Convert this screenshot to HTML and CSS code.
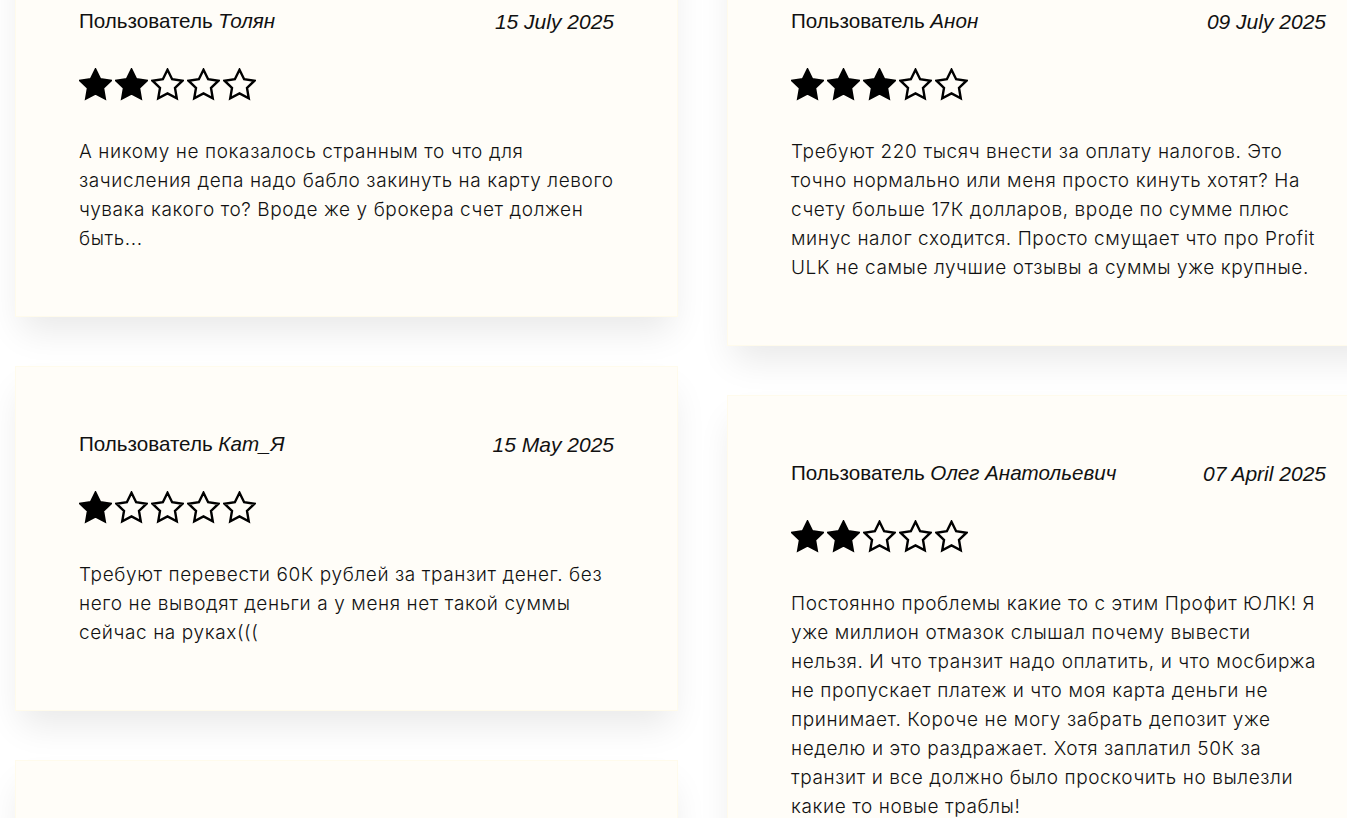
FILE: index.html
```html
<!DOCTYPE html>
<html lang="ru">
<head>
<meta charset="utf-8">
<title>Отзывы</title>
<link rel="stylesheet" href="styles.css">
</head>
<body>
<svg width="0" height="0" class="defs" aria-hidden="true">
  <defs>
    <polygon id="star" points="12,2.2 15.09,8.46 22,9.47 17,14.34 18.18,21.22 12,17.97 5.82,21.22 7,14.34 2,9.47 8.91,8.46"/>
  </defs>
</svg>
<main class="reviews">
  <div class="col">
    <article class="card">
      <header class="card-head">
        <span class="author">Пользователь <em>Толян</em></span>
        <span class="date">15 July 2025</span>
      </header>
      <div class="stars">
        <svg class="star full" viewBox="1 1 22 22"><use href="#star"/></svg>
        <svg class="star full" viewBox="1 1 22 22"><use href="#star"/></svg>
        <svg class="star" viewBox="1 1 22 22"><use href="#star"/></svg>
        <svg class="star" viewBox="1 1 22 22"><use href="#star"/></svg>
        <svg class="star" viewBox="1 1 22 22"><use href="#star"/></svg>
      </div>
      <p class="text">А никому не показалось странным то что для зачисления депа надо бабло закинуть на карту левого чувака какого то? Вроде же у брокера счет должен быть...</p>
    </article>
    <article class="card">
      <header class="card-head">
        <span class="author">Пользователь <em>Кат_Я</em></span>
        <span class="date">15 May 2025</span>
      </header>
      <div class="stars">
        <svg class="star full" viewBox="1 1 22 22"><use href="#star"/></svg>
        <svg class="star" viewBox="1 1 22 22"><use href="#star"/></svg>
        <svg class="star" viewBox="1 1 22 22"><use href="#star"/></svg>
        <svg class="star" viewBox="1 1 22 22"><use href="#star"/></svg>
        <svg class="star" viewBox="1 1 22 22"><use href="#star"/></svg>
      </div>
      <p class="text">Требуют перевести 60К рублей за транзит денег. без него не выводят деньги а у меня нет такой суммы сейчас на руках(((</p>
    </article>
    <article class="card">
      <header class="card-head">
        <span class="author">Пользователь <em>Марина</em></span>
        <span class="date">02 April 2025</span>
      </header>
      <div class="stars">
        <svg class="star full" viewBox="1 1 22 22"><use href="#star"/></svg>
        <svg class="star" viewBox="1 1 22 22"><use href="#star"/></svg>
        <svg class="star" viewBox="1 1 22 22"><use href="#star"/></svg>
        <svg class="star" viewBox="1 1 22 22"><use href="#star"/></svg>
        <svg class="star" viewBox="1 1 22 22"><use href="#star"/></svg>
      </div>
      <p class="text">Вывод не работает уже месяц.</p>
    </article>
  </div>
  <div class="col">
    <article class="card">
      <header class="card-head">
        <span class="author">Пользователь <em>Анон</em></span>
        <span class="date">09 July 2025</span>
      </header>
      <div class="stars">
        <svg class="star full" viewBox="1 1 22 22"><use href="#star"/></svg>
        <svg class="star full" viewBox="1 1 22 22"><use href="#star"/></svg>
        <svg class="star full" viewBox="1 1 22 22"><use href="#star"/></svg>
        <svg class="star" viewBox="1 1 22 22"><use href="#star"/></svg>
        <svg class="star" viewBox="1 1 22 22"><use href="#star"/></svg>
      </div>
      <p class="text">Требуют 220 тысяч внести за оплату налогов. Это точно нормально или меня просто кинуть хотят? На счету больше 17К долларов, вроде по сумме плюс минус налог сходится. Просто смущает что про Profit ULK не самые лучшие отзывы а суммы уже крупные.</p>
    </article>
    <article class="card">
      <header class="card-head">
        <span class="author">Пользователь <em>Олег Анатольевич</em></span>
        <span class="date">07 April 2025</span>
      </header>
      <div class="stars">
        <svg class="star full" viewBox="1 1 22 22"><use href="#star"/></svg>
        <svg class="star full" viewBox="1 1 22 22"><use href="#star"/></svg>
        <svg class="star" viewBox="1 1 22 22"><use href="#star"/></svg>
        <svg class="star" viewBox="1 1 22 22"><use href="#star"/></svg>
        <svg class="star" viewBox="1 1 22 22"><use href="#star"/></svg>
      </div>
      <p class="text">Постоянно проблемы какие то с этим Профит ЮЛК! Я уже миллион отмазок слышал почему вывести нельзя. И что транзит надо оплатить, и что мосбиржа не пропускает платеж и что моя карта деньги не принимает. Короче не могу забрать депозит уже неделю и это раздражает. Хотя заплатил 50К за транзит и все должно было проскочить но вылезли какие то новые траблы!</p>
    </article>
  </div>
</main>
</body>
</html>
```

FILE: styles.css
```css
html, body {
  margin: 0;
  padding: 0;
  background: #ffffff;
  overflow: hidden;
}

.defs {
  position: absolute;
  width: 0;
  height: 0;
}

.reviews {
  display: flex;
  align-items: flex-start;
  gap: 49px;
  padding-left: 15px;
  margin-top: -57px;
  width: max-content;
}

.col {
  display: flex;
  flex-direction: column;
  gap: 49px;
  width: 663px;
}

.card {
  background: #fffdf8;
  border: 1px solid #fffbec;
  box-shadow: 0 20px 34px -6px rgba(0, 0, 0, 0.09);
  padding: 63px 63px 63px;
  color: #111;
}

.card-head {
  display: flex;
  justify-content: space-between;
  align-items: baseline;
  height: 28px;
  line-height: 28px;
}

.author {
  font-family: "Liberation Sans", Arial, sans-serif;
  font-size: 20.6px;
  color: #111;
}

.author em {
  font-style: italic;
}

.date {
  font-family: "Liberation Sans", Arial, sans-serif;
  font-style: italic;
  font-size: 21px;
  color: #111;
  position: relative;
  top: 1px;
}

.stars {
  display: flex;
  gap: 3px;
  margin-top: 33px;
  height: 33px;
}

.star {
  width: 33px;
  height: 33px;
  display: block;
}

.star use {
  fill: none;
  stroke: #000;
  stroke-width: 1.6;
  stroke-linejoin: miter;
}

.star.full use {
  fill: #000;
}

.text {
  margin: 36px 0 0;
  font-family: Inter, "Noto Sans", sans-serif;
  font-size: 19px;
  font-weight: 300;
  letter-spacing: 0.6px;
  line-height: 29px;
  color: #111;
}
```
